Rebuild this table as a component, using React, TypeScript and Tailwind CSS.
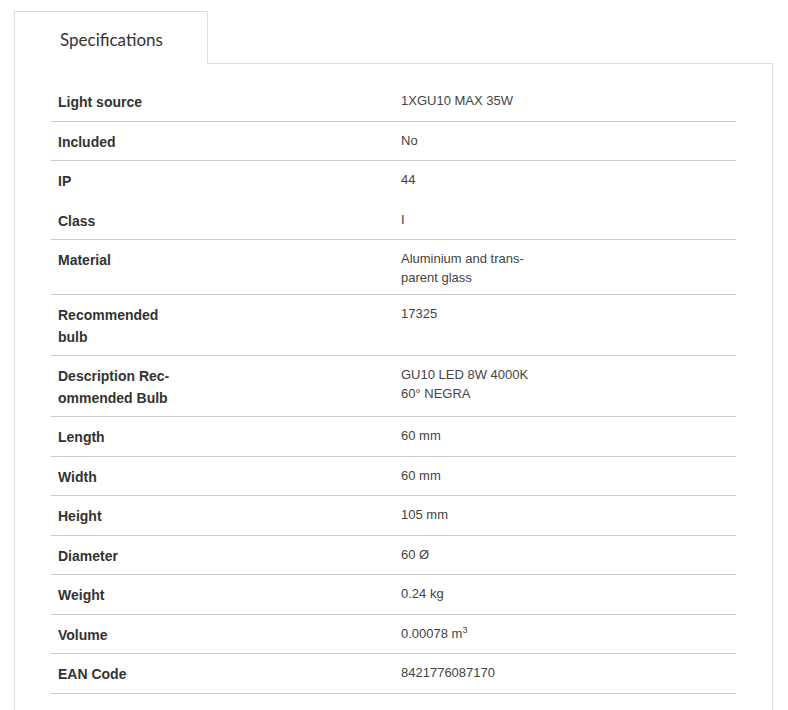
import React from 'react'

type Spec = { label: React.ReactNode; value: React.ReactNode; noBorder?: boolean }

const specs: Spec[] = [
  { label: 'Light source', value: '1XGU10 MAX 35W' },
  { label: 'Included', value: 'No' },
  { label: 'IP', value: '44', noBorder: true },
  { label: 'Class', value: 'I' },
  { label: 'Material', value: <>Aluminium and trans-<br />parent glass</> },
  { label: <>Recommended<br />bulb</>, value: '17325' },
  { label: <>Description Rec-<br />ommended Bulb</>, value: <>GU10 LED 8W 4000K<br />60° NEGRA</> },
  { label: 'Length', value: '60 mm' },
  { label: 'Width', value: '60 mm' },
  { label: 'Height', value: '105 mm' },
  { label: 'Diameter', value: '60 Ø' },
  { label: 'Weight', value: '0.24 kg' },
  { label: 'Volume', value: <>0.00078 m<sup className="text-[9px]">3</sup></> },
  { label: 'EAN Code', value: '8421776087170' },
]

export default function App() {
  return (
    <div className="min-h-[710px] bg-white pl-[14px] pt-[11px] font-['Liberation_Sans',Arial,sans-serif]">
      {/* Tab */}
      <div className="relative z-10 -mb-px flex h-[53px] w-[194px] items-center border border-b-0 border-[#dddddd] bg-white pl-[45px] pt-[3px]">
        <span className="font-['Lato',sans-serif] text-[17px] text-[#333]">Specifications</span>
      </div>

      {/* Panel */}
      <div className="w-[759px] border border-[#dddddd] px-[36px] pt-[18px] pb-[40px]">
        <div className="flex flex-col">
          {specs.map((s, i) => (
            <div
              key={i}
              className={`flex ${s.noBorder ? 'border-b border-transparent' : 'border-b border-[#cccccc]'}`}
            >
              <div className="w-[350px] shrink-0 pl-[7px] pt-[10px] pb-[7px] text-[14px] font-bold leading-[21.5px] text-[#333]">
                {s.label}
              </div>
              <div className="pt-[10px] pb-[7px] text-[13px] leading-[18.5px] text-[#444]">
                {s.value}
              </div>
            </div>
          ))}
        </div>
      </div>
    </div>
  )
}
